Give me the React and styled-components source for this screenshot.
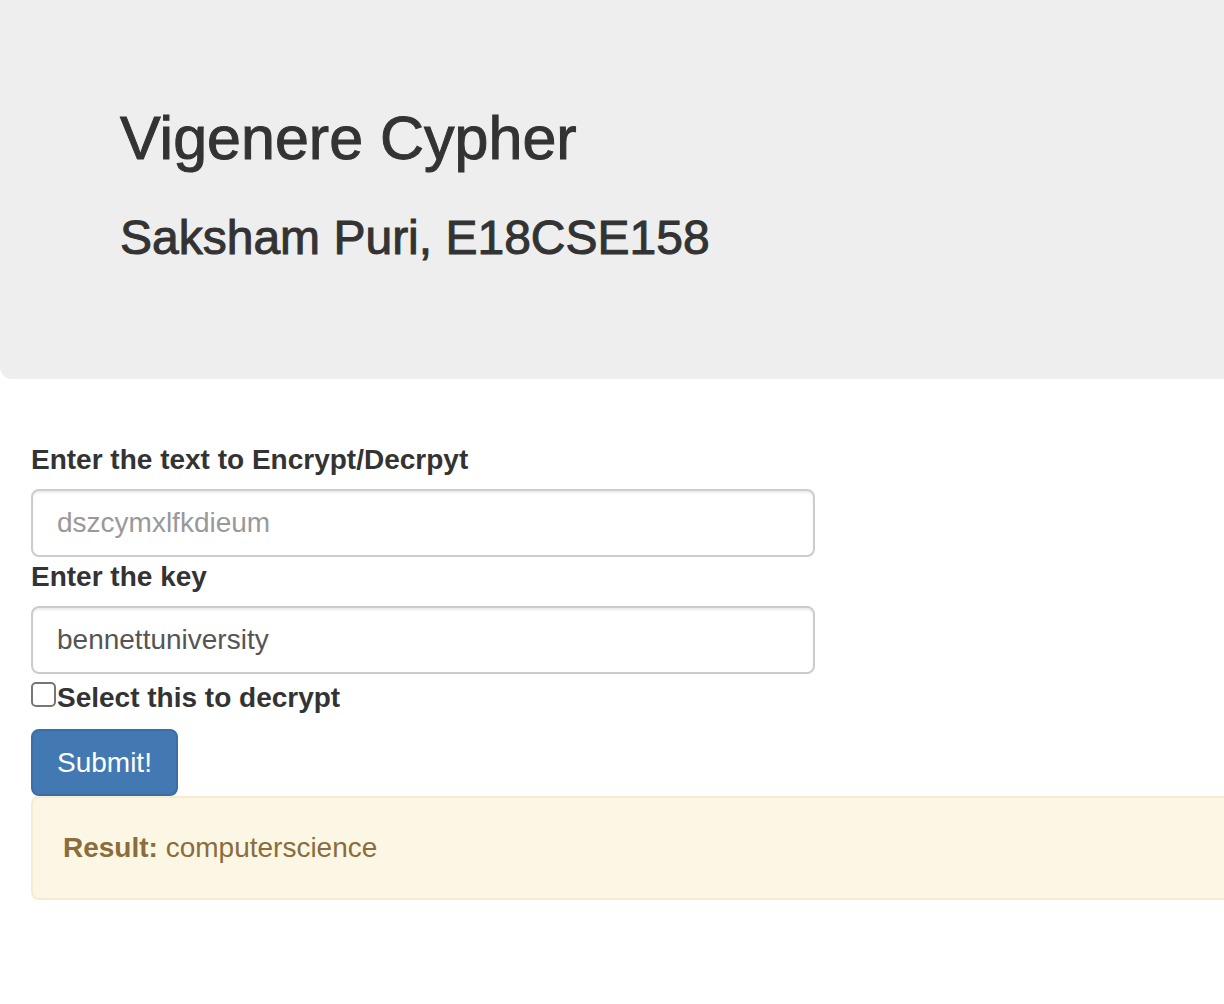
import React from "react";
import styled, { createGlobalStyle } from "styled-components";

const Global = createGlobalStyle`
  html, body {
    margin: 0;
    padding: 0;
    background: #fff;
    overflow-x: hidden;
  }
  body {
    font-family: "Liberation Sans", Helvetica, Arial, sans-serif;
    font-size: 28px;
    line-height: 40px;
    color: #333;
  }
  * { box-sizing: border-box; }
`;

const Page = styled.div`
  width: 1260px;
`;

const Jumbotron = styled.header`
  background: #eeeeee;
  padding: 105px 0 114px 120px;
  border-bottom-left-radius: 12px;
`;

const Heading = styled.h2`
  margin: 0;
  font-weight: 500;
  color: #333;
  line-height: 1.1;
  font-size: ${(p) => p.$size}px;
  -webkit-text-stroke: 1px #333;
  & + & {
    margin-top: 40px;
  }
`;

const Form = styled.form`
  padding: 61px 0 0 31px;
`;

const Label = styled.label`
  display: block;
  font-weight: 700;
  font-size: 28px;
  line-height: 40px;
  color: #333;
  margin-bottom: 9px;
`;

const TextInput = styled.input`
  display: block;
  width: 784px;
  height: 68px;
  padding: 12px 24px;
  border: 2px solid #cccccc;
  border-radius: 8px;
  box-shadow: inset 0 2px 2px rgba(0, 0, 0, 0.075);
  font-family: "Liberation Sans", Helvetica, Arial, sans-serif;
  font-size: 28px;
  line-height: 40px;
  color: #555;
  background: #fff;
  outline: none;
  &::placeholder {
    color: #999;
  }
`;

const CheckRow = styled.div`
  display: flex;
  align-items: flex-start;
  margin-top: 4px;
`;

const Checkbox = styled.input`
  appearance: none;
  -webkit-appearance: none;
  width: 25px;
  height: 25px;
  margin: 4px 1px 0 0;
  border: 2px solid #767676;
  border-radius: 5px;
  background: #fff;
  flex: none;
`;

const CheckLabel = styled.label`
  font-weight: 700;
  font-size: 28px;
  line-height: 40px;
  color: #333;
`;

const Button = styled.button`
  display: block;
  margin-top: 11px;
  padding: 12px 24px;
  height: 67px;
  border: 2px solid #3a6ea6;
  border-radius: 8px;
  background: #4279b2;
  color: #fff;
  font-family: "Liberation Sans", Helvetica, Arial, sans-serif;
  font-size: 28px;
  line-height: 40px;
  cursor: pointer;
`;

const Alert = styled.div`
  width: 1240px;
  padding: 30px;
  border: 2px solid #f8ebcf;
  border-radius: 8px;
  background: #fbf7e4;
  color: #8a6d3b;
  font-size: 28px;
  line-height: 40px;
`;

const Strong = styled.strong`
  font-weight: 700;
`;

export default function App() {
  return (
    <Page>
      <Global />
      <Jumbotron>
        <Heading as="h2" $size={61}>Vigenere Cypher</Heading>
        <Heading as="h3" $size={48}>Saksham Puri, E18CSE158</Heading>
      </Jumbotron>
      <Form onSubmit={(e) => e.preventDefault()}>
        <Label htmlFor="text">Enter the text to Encrypt/Decrpyt</Label>
        <TextInput id="text" type="text" placeholder="dszcymxlfkdieum" />
        <Label htmlFor="key">Enter the key</Label>
        <TextInput id="key" type="text" defaultValue="bennettuniversity" />
        <CheckRow>
          <Checkbox id="decrypt" type="checkbox" />
          <CheckLabel htmlFor="decrypt">Select this to decrypt</CheckLabel>
        </CheckRow>
        <Button type="submit">Submit!</Button>
        <Alert>
          <Strong>Result:</Strong> computerscience
        </Alert>
      </Form>
    </Page>
  );
}
